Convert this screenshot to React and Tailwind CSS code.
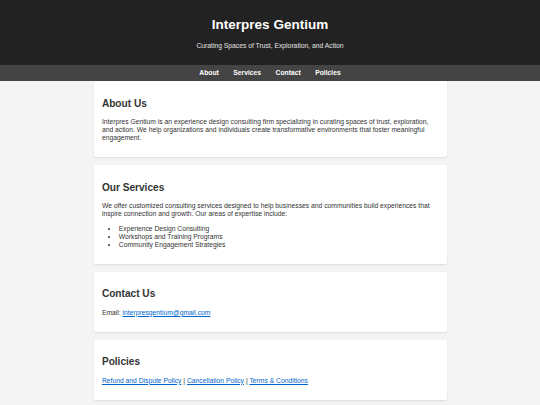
import React from 'react'

// Tarjeta de sección con sombra suave
const Section = ({ title, children }) => (
  <section className="bg-white mb-[8px] p-[8.4px] rounded-[2px] shadow-[0_1px_2px_rgba(0,0,0,0.1)]">
    <h2 className="text-[10.125px] font-bold my-[8.4px]">{title}</h2>
    {children}
  </section>
)

export default function App() {
  const links = ['About', 'Services', 'Contact', 'Policies']

  return (
    <div className="min-h-screen bg-[#f4f4f4] font-['Liberation_Sans',Arial,sans-serif] text-[6.75px] leading-[1.17] text-[#333]">
      {/* Cabecera */}
      <header className="bg-[#222] text-white text-center py-[8.4px]">
        <h1 className="text-[13.5px] font-bold my-[9px]">Interpres Gentium</h1>
        <p className="my-[6.75px] text-[#e4e4e4]">Curating Spaces of Trust, Exploration, and Action</p>
      </header>

      {/* Navegación */}
      <nav className="bg-[#444] py-[4.2px] flex justify-center gap-[14.5px]">
        {links.map((l) => (
          <a key={l} href={`#${l.toLowerCase()}`} className="text-white font-bold">
            {l}
          </a>
        ))}
      </nav>

      <main className="w-[353px] mx-auto">
        <Section title="About Us">
          <p className="my-[6.75px]">
            Interpres Gentium is an experience design consulting firm specializing in curating spaces of trust, exploration,
            and action. We help organizations and individuals create transformative environments that foster meaningful
            engagement.
          </p>
        </Section>

        <Section title="Our Services">
          <p className="my-[6.75px]">
            We offer customized consulting services designed to help businesses and communities build experiences that
            inspire connection and growth. Our areas of expertise include:
          </p>
          <ul className="list-disc pl-[16.9px] my-[6.75px]">
            <li>Experience Design Consulting</li>
            <li>Workshops and Training Programs</li>
            <li>Community Engagement Strategies</li>
          </ul>
        </Section>

        <Section title="Contact Us">
          <p className="my-[6.75px]">
            Email:{' '}
            <a href="mailto:interpresgentium@gmail.com" className="text-[#0066cc] underline">
              interpresgentium@gmail.com
            </a>
          </p>
        </Section>

        <Section title="Policies">
          <p className="my-[6.75px]">
            <a href="#refund" className="text-[#0066cc] underline">Refund and Dispute Policy</a> |{' '}
            <a href="#cancel" className="text-[#0066cc] underline">Cancellation Policy</a> |{' '}
            <a href="#terms" className="text-[#0066cc] underline">Terms &amp; Conditions</a>
          </p>
        </Section>
      </main>
    </div>
  )
}
